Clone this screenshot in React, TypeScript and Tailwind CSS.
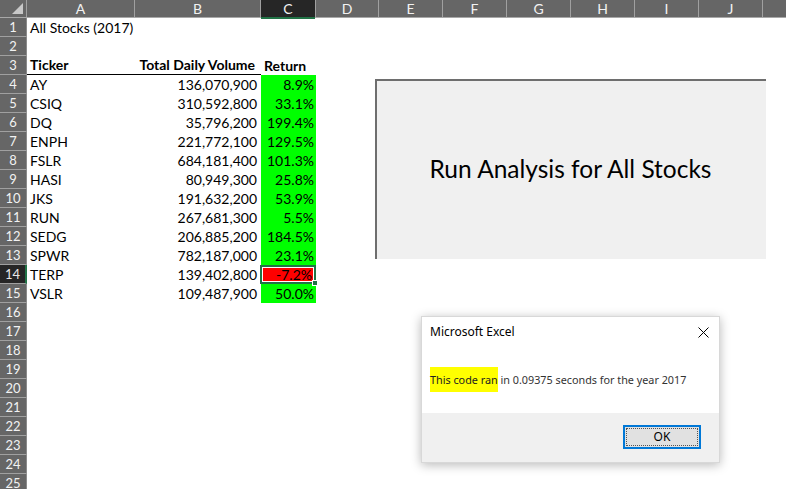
import React from "react";

const data: [string, string, string][] = [
  ["AY", "136,070,900", "8.9%"],
  ["CSIQ", "310,592,800", "33.1%"],
  ["DQ", "35,796,200", "199.4%"],
  ["ENPH", "221,772,100", "129.5%"],
  ["FSLR", "684,181,400", "101.3%"],
  ["HASI", "80,949,300", "25.8%"],
  ["JKS", "191,632,200", "53.9%"],
  ["RUN", "267,681,300", "5.5%"],
  ["SEDG", "206,885,200", "184.5%"],
  ["SPWR", "782,187,000", "23.1%"],
  ["TERP", "139,402,800", "-7.2%"],
  ["VSLR", "109,487,900", "50.0%"],
];

const cols = ["E", "F", "G", "H", "I", "J"];

function RowHead({ n, sel }: { n: number; sel?: boolean }) {
  return (
    <div
      className={
        sel
          ? "w-[27px] shrink-0 h-full flex items-center justify-center text-[13px] bg-[#262626] text-[#e8e8e8] border-b border-[#a0a0a0] border-r-2 border-r-[#217346]"
          : "w-[27px] shrink-0 h-full flex items-center justify-center text-[13px] bg-[#666666] text-[#f2f2f2] border-b border-[#a0a0a0] border-r border-r-[#8a8a8a]"
      }
    >
      {n}
    </div>
  );
}

export default function App() {
  const rows: React.ReactNode[] = [];
  for (let i = 1; i <= 25; i++) {
    const d = i >= 4 && i <= 15 ? data[i - 4] : null;
    const sel = i === 14;
    rows.push(
      <div key={i} className="flex h-[19px] text-[14px] leading-none whitespace-nowrap">
        <RowHead n={i} sel={sel} />
        <div
          className={
            "w-[108px] shrink-0 flex items-center pl-[3px] text-black overflow-visible" +
            (i === 3 ? " font-bold border-b border-black" : "")
          }
        >
          {i === 1 ? "All Stocks (2017)" : i === 3 ? "Ticker" : d ? d[0] : ""}
        </div>
        <div
          className={
            "w-[126px] shrink-0 flex items-center justify-end text-black" +
            (i === 3 ? " font-bold border-b border-black pr-[6px]" : " pr-[4px]")
          }
        >
          {i === 3 ? "Total Daily Volume" : d ? d[1] : ""}
        </div>
        {sel ? (
          <div className="w-[56px] shrink-0 relative -ml-[1px] border-2 border-[#217346] bg-white p-[1px]">
            <div className="w-full h-full bg-[#ff0000] flex items-center justify-end pr-[1px] text-black">
              {d ? d[2] : ""}
            </div>
            <div className="absolute -right-[4px] -bottom-[4px] w-[6px] h-[6px] bg-[#217346] border border-white" />
          </div>
        ) : (
          <div
            className={
              "w-[55px] shrink-0 flex items-center text-black" +
              (d ? " bg-[#00ff00] justify-end pr-[2px]" : "") +
              (i === 3 ? " font-bold pl-[3px]" : "")
            }
          >
            {i === 3 ? "Return" : d ? d[2] : ""}
          </div>
        )}
        <div className="flex-1" />
      </div>
    );
  }

  return (
    <div
      className="relative w-[786px] h-[489px] overflow-hidden bg-white"
      style={{ fontFamily: "Lato, 'Open Sans', sans-serif" }}
    >
      {/* column headers */}
      <div className="flex h-[18px] bg-[#666666] text-[#f2f2f2] text-[14px] leading-none border-b border-[#a8a8a8]">
        <div className="w-[27px] shrink-0 h-full border-r border-[#a0a0a0] relative">
          <svg className="absolute right-[3px] bottom-[3px]" width="11" height="11" viewBox="0 0 11 11">
            <polygon points="11,0 11,11 0,11" fill="#c8c8c8" />
          </svg>
        </div>
        <div className="w-[108px] shrink-0 h-full border-r border-[#a0a0a0] flex items-center justify-center">A</div>
        <div className="w-[126px] shrink-0 h-full border-r border-[#a0a0a0] flex items-center justify-center">B</div>
        <div className="w-[54px] shrink-0 h-[19px] bg-[#262626] border-b-2 border-[#217346] flex items-center justify-center">C</div>
        <div className="w-[64px] shrink-0 h-full border-r border-l border-[#a0a0a0] flex items-center justify-center">D</div>
        {cols.map((c) => (
          <div key={c} className="w-[64px] shrink-0 h-full border-r border-[#a0a0a0] flex items-center justify-center">
            {c}
          </div>
        ))}
        <div className="flex-1" />
      </div>

      {rows}

      {/* Button shape */}
      <div className="absolute left-[375px] top-[79px] w-[391px] h-[180px] bg-[#f0f0f0] border-t-2 border-l-2 border-[#6e6e6e] flex items-center justify-center">
        <span className="text-[24.5px] text-black pb-[2px] pr-[2px]">Run Analysis for All Stocks</span>
      </div>

      {/* Dialog */}
      <div
        className="absolute left-[421px] top-[316px] w-[299px] h-[147px] bg-white border border-[#d8d8d8] shadow-[0_2px_10px_rgba(0,0,0,0.28)] flex flex-col"
        style={{ fontFamily: "'Noto Sans', 'Open Sans', sans-serif" }}
      >
        <div className="h-[30px] flex items-center justify-between pl-[8px] pr-[10px]">
          <span className="text-[12px] text-black">Microsoft Excel</span>
          <svg width="11" height="11" viewBox="0 0 11 11">
            <path d="M0.5 0.5 L10.5 10.5 M10.5 0.5 L0.5 10.5" stroke="#000" strokeWidth="1" />
          </svg>
        </div>
        <div className="h-[66px] flex items-center pl-[8px]">
          <span className="text-[10.8px] text-[#333333] whitespace-nowrap">
            <span className="bg-[#ffff00] py-[5px] text-[#222]">This code ran</span> in 0.09375 seconds for the year 2017
          </span>
        </div>
        <div className="flex-1 bg-[#f0f0f0] flex items-start justify-end pr-[18px] pt-[12px]">
          <div className="w-[78px] h-[24px] border-2 border-[#0078d7] bg-[#e1e1e1] p-[1px]">
            <div className="w-full h-full border border-dotted border-[#555] flex items-center justify-center text-[12px] text-black">
              OK
            </div>
          </div>
        </div>
      </div>
    </div>
  );
}
